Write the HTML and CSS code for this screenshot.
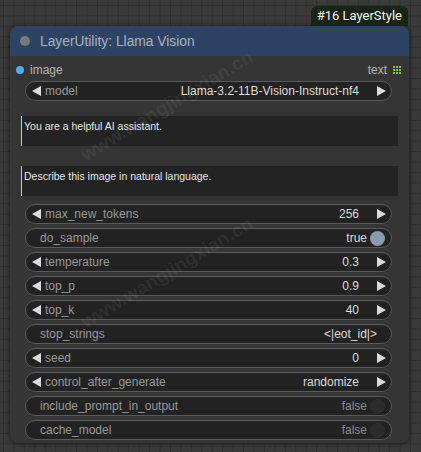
FILE: index.html
```html
<!DOCTYPE html>
<html>
<head>
<meta charset="utf-8">
<link rel="stylesheet" href="styles.css">
</head>
<body>
<div class="canvas">
  <div class="badge-row"><div class="badge">#16 LayerStyle</div></div>
  <div class="node">
    <div class="title">
      <span class="title-dot"></span>
      <span class="title-text">LayerUtility: Llama Vision</span>
    </div>
    <div class="body">
      <div class="slots">
        <div class="slot-in"><span class="in-dot"></span><span>image</span></div>
        <div class="slot-out"><span>text</span>
          <svg class="grid-icon" width="8" height="8" viewBox="0 0 8 8">
            <rect x="0" y="0" width="2" height="2"/><rect x="3" y="0" width="2" height="2"/><rect x="6" y="0" width="2" height="2"/>
            <rect x="0" y="3" width="2" height="2"/><rect x="3" y="3" width="2" height="2"/><rect x="6" y="3" width="2" height="2"/>
            <rect x="0" y="6" width="2" height="2"/><rect x="3" y="6" width="2" height="2"/><rect x="6" y="6" width="2" height="2"/>
          </svg>
        </div>
      </div>

      <div class="widget arrows model">
        <span class="arr left"></span><span class="label">model</span><span class="value">Llama-3.2-11B-Vision-Instruct-nf4</span><span class="arr right"></span>
      </div>

      <div class="textarea ta1">You are a helpful AI assistant.</div>
      <div class="textarea ta2">Describe this image in natural language.</div>

      <div class="widgets">
        <div class="widget arrows"><span class="arr left"></span><span class="label">max_new_tokens</span><span class="value">256</span><span class="arr right"></span></div>
        <div class="widget toggle"><span class="label">do_sample</span><span class="value">true</span><span class="knob on"></span></div>
        <div class="widget arrows"><span class="arr left"></span><span class="label">temperature</span><span class="value">0.3</span><span class="arr right"></span></div>
        <div class="widget arrows"><span class="arr left"></span><span class="label">top_p</span><span class="value">0.9</span><span class="arr right"></span></div>
        <div class="widget arrows"><span class="arr left"></span><span class="label">top_k</span><span class="value">40</span><span class="arr right"></span></div>
        <div class="widget text"><span class="label">stop_strings</span><span class="value">&lt;|eot_id|&gt;</span></div>
        <div class="widget arrows"><span class="arr left"></span><span class="label">seed</span><span class="value">0</span><span class="arr right"></span></div>
        <div class="widget arrows"><span class="arr left"></span><span class="label">control_after_generate</span><span class="value">randomize</span><span class="arr right"></span></div>
        <div class="widget toggle"><span class="label">include_prompt_in_output</span><span class="value off">false</span><span class="knob"></span></div>
        <div class="widget toggle"><span class="label">cache_model</span><span class="value off">false</span><span class="knob"></span></div>
      </div>
    </div>
  </div>
  <div class="watermarks">
    <span class="wm wm1">www.wangjingxian.cn</span>
    <span class="wm wm2">www.wangjingxian.cn</span>
  </div>
</div>
</body>
</html>
```

FILE: styles.css
```css
html, body {
  margin: 0;
  padding: 0;
}
body {
  width: 421px;
  height: 452px;
  overflow: hidden;
  background-color: #3a3a3a;
  background-image:
    linear-gradient(to right, #2f2f2f 1px, transparent 1px),
    linear-gradient(to bottom, #2f2f2f 1px, transparent 1px);
  background-size: 10.45px 10.45px;
  background-position: 3px 5px;
  font-family: "Liberation Sans", Arial, sans-serif;
}
.canvas {
  position: relative;
  padding: 6px 0 0 10px;
  width: 399px;
}
.badge-row {
  display: flex;
  justify-content: flex-end;
  padding-right: 1px;
}
.badge {
  height: 20px;
  line-height: 20px;
  padding: 0 6px;
  background: #172416;
  color: #f4f4f4;
  font-family: Roboto, "Liberation Sans", sans-serif;
  font-size: 13px;
  border-radius: 6px 6px 0 0;
}
.node {
  width: 399px;
  height: 417px;
  background: #353535;
  border-radius: 8px;
  box-shadow: 0 0 5px 1px rgba(0,0,0,0.45);
  overflow: hidden;
}
.title {
  height: 30px;
  background: #2d4363;
  display: flex;
  align-items: center;
  padding-left: 10px;
  gap: 10px;
}
.title-dot {
  width: 10px;
  height: 10px;
  border-radius: 50%;
  background: #7a7a7a;
}
.title-text {
  color: #a9b2bf;
  font-size: 13.8px;
}
.body {
  padding: 4px 0 0 0;
}
.slots {
  height: 20px;
  display: flex;
  justify-content: space-between;
  align-items: center;
  font-size: 12px;
  color: #b4b4b4;
}
.slot-in {
  display: flex;
  align-items: center;
  padding-left: 6px;
  gap: 6px;
}
.in-dot {
  width: 8px;
  height: 8px;
  border-radius: 50%;
  background: #58aaee;
}
.slot-out {
  display: flex;
  align-items: center;
  gap: 6px;
  padding-right: 8px;
}
.grid-icon {
  fill: #86c040;
  margin-top: -1px;
}
.widget {
  box-sizing: border-box;
  margin-left: 15px;
  width: 367px;
  height: 20px;
  border: 1px solid #5a5a5a;
  border-radius: 10px;
  background: #222222;
  display: flex;
  align-items: center;
  font-size: 12px;
  color: #999999;
}
.model {
  margin-top: 1px;
}
.widgets {
  margin-top: 8px;
  display: flex;
  flex-direction: column;
  gap: 4px;
}
.widget .label {
  flex: 1;
  white-space: nowrap;
}
.widget .value {
  color: #dddddd;
  white-space: nowrap;
}
.widget .value.off {
  color: #8c8c8c;
}
.arrows {
  padding-left: 6px;
  padding-right: 5px;
}
.arrows .label {
  margin-left: 4px;
}
.arrows .value {
  margin-right: 18px;
}
.arr {
  width: 0;
  height: 0;
  border-top: 5px solid transparent;
  border-bottom: 5px solid transparent;
}
.arr.left {
  border-right: 9px solid #dcdcdc;
}
.arr.right {
  border-left: 9px solid #dcdcdc;
}
.toggle {
  padding-left: 14px;
  padding-right: 6px;
}
.toggle .value {
  margin-right: 1px;
}
.knob {
  width: 15px;
  height: 15px;
  border-radius: 50%;
  background: #2c2c2c;
  margin-left: 2px;
}
.knob.on {
  background: #8a9bb0;
}
.text {
  padding-left: 14px;
  padding-right: 14px;
}
.textarea {
  box-sizing: border-box;
  margin-left: 11px;
  width: 377px;
  height: 30px;
  background: #232323;
  border-left: 1px solid #c8c8c8;
  color: #e6e6e6;
  font-size: 10.5px;
  padding: 4px 0 0 2px;
}
.ta1 {
  margin-top: 15px;
}
.ta2 {
  margin-top: 20px;
}
.watermarks {
  position: absolute;
  left: 0;
  top: 0;
  width: 421px;
  height: 452px;
  pointer-events: none;
  overflow: hidden;
}
.wm {
  position: absolute;
  transform-origin: 0 100%;
  transform: rotate(-31deg);
  font-size: 19px;
  font-weight: bold;
  color: rgba(255,255,255,0.07);
  white-space: nowrap;
  line-height: 20px;
}
.wm1 { left: 88px; top: 145px; }
.wm2 { left: 88px; top: 312px; }
```
